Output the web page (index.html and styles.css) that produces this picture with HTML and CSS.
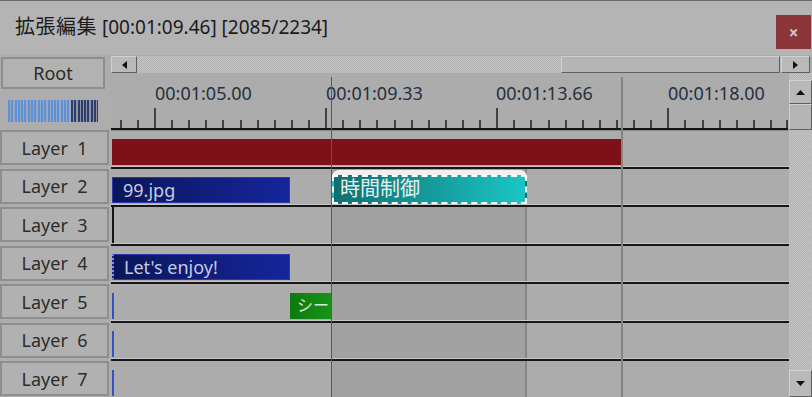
FILE: index.html
```html
<!DOCTYPE html>
<html lang="ja">
<head>
<meta charset="utf-8">
<title>拡張編集</title>
<link rel="stylesheet" href="styles.css">
</head>
<body>
<div class="window">
  <header class="titlebar">
    <span class="title"><span class="title-jp">拡張編集</span> [00:01:09.46] [2085/2234]</span>
    <div class="close">×</div>
  </header>
  <div class="main">
    <aside class="left">
      <div class="root">Root</div>
      <div class="meter"><div class="meter-lo"></div><div class="meter-hi"></div></div>
      <div class="layers">
        <div class="layer"><div class="layer-btn">Layer  1</div></div>
        <div class="layer"><div class="layer-btn">Layer  2</div></div>
        <div class="layer"><div class="layer-btn">Layer  3</div></div>
        <div class="layer"><div class="layer-btn">Layer  4</div></div>
        <div class="layer"><div class="layer-btn">Layer  5</div></div>
        <div class="layer"><div class="layer-btn">Layer  6</div></div>
        <div class="layer"><div class="layer-btn">Layer  7</div></div>
      </div>
    </aside>
    <section class="right">
      <div class="hscroll">
        <div class="sb-btn sb-left"><svg width="5" height="8" viewBox="0 0 5 8"><path d="M5 0V8L0 4Z" fill="#111"/></svg></div>
        <div class="track"><div class="thumb"></div></div>
        <div class="sb-btn sb-right"><svg width="5" height="8" viewBox="0 0 5 8"><path d="M0 0V8L5 4Z" fill="#111"/></svg></div>
      </div>
      <div class="content">
        <div class="timeline">
          <svg class="ruler" width="678" height="57" viewBox="0 0 678 57">
            <g class="labels">
              <text x="44" y="27">00:01:05.00</text>
              <text x="215" y="27">00:01:09.33</text>
              <text x="385" y="27">00:01:13.66</text>
              <text x="557" y="27">00:01:18.00</text>
            </g>
            <rect x="0" y="55" width="677" height="2" fill="#141414"/>
            <path stroke="#141414" stroke-width="1.4" d="M10 47V55M27 47V55M61 47V55M78 47V55M95 47V55M112 47V55M130 47V55M147 47V55M164 47V55M181 47V55M198 47V55M232 47V55M249 47V55M266 47V55M284 47V55M301 47V55M318 47V55M335 47V55M352 47V55M369 47V55M403 47V55M420 47V55M438 47V55M455 47V55M472 47V55M489 47V55M506 47V55M523 47V55M540 47V55M574 47V55M592 47V55M609 47V55M626 47V55M643 47V55M660 47V55M676 47V55M44 35V55M215 35V55M386 35V55M557 35V55"/>
          </svg>
          <div class="rows">
            <div class="row first">
              <div class="clip red" style="left:1px;width:509px"></div>
            </div>
            <div class="row">
              <div class="zone"></div>
              <div class="clip blue" style="left:1px;width:178px"><span>99.jpg</span></div>
              <div class="clip selected" style="left:221px;width:195px"><div class="teal">時間制御</div></div>
            </div>
            <div class="row">
              <div class="zone"></div>
              <div class="mark-black"></div>
            </div>
            <div class="row">
              <div class="zone"></div>
              <div class="clip blue dotted" style="left:1px;width:178px"><span>Let's enjoy!</span></div>
            </div>
            <div class="row">
              <div class="zone"></div>
              <div class="mark-blue"></div>
              <div class="clip green" style="left:179px;width:41px"><span>シー</span></div>
            </div>
            <div class="row">
              <div class="zone"></div>
              <div class="mark-blue"></div>
            </div>
            <div class="row">
              <div class="zone"></div>
              <div class="mark-blue"></div>
            </div>
          </div>
          <div class="gridline"></div>
          <div class="playhead"></div>
        </div>
        <div class="vscroll">
          <div class="vbtn up"><svg width="9" height="5" viewBox="0 0 9 5"><path d="M0 5H9L4.5 0Z" fill="#111"/></svg></div>
          <div class="vthumb"></div>
          <div class="vtrack"></div>
          <div class="vbtn down"><svg width="9" height="5" viewBox="0 0 9 5"><path d="M0 0H9L4.5 5Z" fill="#111"/></svg></div>
        </div>
      </div>
    </section>
  </div>
</div>
</body>
</html>
```
FILE: styles.css
```css
* { box-sizing: border-box; }
html, body { margin: 0; padding: 0; }
body {
  width: 812px;
  height: 397px;
  overflow: hidden;
  background: #acacac;
  font-family: "Noto Sans", "Noto Sans CJK JP", sans-serif;
}
.window {
  width: 812px;
  height: 397px;
  display: flex;
  flex-direction: column;
  border-top: 1px solid #6a6a6a;
  background: #acacac;
}
.titlebar {
  height: 54px;
  flex: none;
  background: #b4b4b4;
  display: flex;
  align-items: flex-start;
  justify-content: space-between;
}
.title {
  margin: 12px 0 0 15px;
  font-size: 19px;
  line-height: 28px;
  color: #1b1b1b;
  white-space: nowrap;
}
.title-jp {
  font-size: 20px;
  letter-spacing: 0.5px;
}
.close {
  width: 35px;
  height: 34px;
  margin: 14px 1px 0 0;
  background: #8b3538;
  color: #cbc4c4;
  font-size: 17px;
  font-weight: bold;
  display: flex;
  align-items: center;
  justify-content: center;
  line-height: 1;
}
.main {
  flex: 1;
  min-height: 0;
  display: flex;
}
.left {
  width: 111px;
  flex: none;
  display: flex;
  flex-direction: column;
  background: #adadad;
}
.root {
  margin: 2px 0 0 1px;
  width: 104px;
  height: 32px;
  flex: none;
  border: 2px solid #8e8e8e;
  background: #b2b2b2;
  display: flex;
  align-items: center;
  justify-content: center;
  font-size: 18px;
  color: #2a2a2a;
}
.meter {
  margin: 11px 0 0 8px;
  width: 90px;
  height: 22px;
  flex: none;
  display: flex;
}
.meter-lo {
  width: 63px;
  background: repeating-linear-gradient(90deg, #5c91d8 0 2px, #9aa8bf 2px 3.3px);
}
.meter-hi {
  width: 27px;
  background: repeating-linear-gradient(90deg, #2f3d6a 0 2px, #8c93a6 2px 3.3px);
}
.layers {
  margin-top: 8px;
  display: flex;
  flex-direction: column;
}
.layer {
  height: 38.5px;
  flex: none;
}
.layer-btn {
  width: 109px;
  height: 35px;
  border: 2px solid #8e8e8e;
  background: #b1b1b1;
  display: flex;
  align-items: center;
  justify-content: center;
  font-size: 18px;
  white-space: pre;
  color: #2c2c2c;
}
.right {
  flex: 1;
  min-width: 0;
  display: flex;
  flex-direction: column;
}
.hscroll {
  height: 18px;
  flex: none;
  display: flex;
  padding-top: 1px;
}
.sb-btn {
  border: 1px solid;
  border-color: #d2d2d2 #5f5f5f #5f5f5f #d2d2d2;
  background: #b9b9b9;
  display: flex;
  align-items: center;
  justify-content: center;
  flex: none;
}
.sb-left { width: 26px; }
.sb-right { width: 29px; margin-right: 2px; }
.track {
  flex: 1;
  display: flex;
  background-color: #bbbbbb;
  background-image: repeating-conic-gradient(#b4b4b4 0 25%, #c2c2c2 0 50%);
  background-size: 2px 2px;
}
.thumb {
  width: 219px;
  margin-left: auto;
  margin-right: 1px;
  border: 1px solid;
  border-color: #cfcfcf #5f5f5f #5f5f5f #cfcfcf;
  background: #b5b5b5;
}
.content {
  flex: 1;
  min-height: 0;
  display: flex;
}
.timeline {
  width: 678px;
  flex: none;
  position: relative;
  overflow: hidden;
  background: #acacac;
}
.ruler { display: block; }
.labels {
  font-family: "Noto Sans", sans-serif;
  font-size: 18px;
  fill: #263040;
}
.rows {
  display: flex;
  flex-direction: column;
}
.row {
  height: 38.5px;
  flex: none;
  position: relative;
  border-top: 2px solid #161616;
  box-shadow: 0 -1px 0 #c6c6c6;
}
.row.first {
  height: 36.5px;
  border-top: 1px solid #8a8a8a;
  box-shadow: none;
}
.zone {
  position: absolute;
  left: 221px;
  width: 195px;
  top: 0;
  bottom: 0;
  background: #a1a1a1;
  border-right: 2px solid #868686;
}
.clip {
  position: absolute;
  top: 8.5px;
  height: 26px;
  font-size: 18px;
  line-height: 24px;
  white-space: nowrap;
  overflow: hidden;
}
.row.first .clip { top: 8px; }
.clip span { padding-left: 10px; }
.red { background: #7e1117; }
.blue {
  background: linear-gradient(90deg, #0b165a, #15259c);
  border: 1px solid #2a3aa6;
  color: #c7cbe0;
}
.dotted { border-left: 2px dotted #8c94c8; }
.green {
  background: linear-gradient(90deg, #0d7a0d, #179417);
  color: #d8ead8;
  font-size: 16px;
}
.green span { padding-left: 7px; }
.selected {
  top: 1.5px;
  height: 36px;
  padding: 5px 0 2px 0;
  background: #f0f0f0;
  border-radius: 7px 7px 0 0;
}
.teal {
  height: 100%;
  background: linear-gradient(90deg, #0f6f70, #1bc5c5);
  border: 2px dashed #ffffff;
  color: #e6f2f2;
  font-size: 20px;
  line-height: 24px;
  padding-left: 6px;
}
.mark-black {
  position: absolute;
  left: 1px;
  top: 0;
  bottom: 0;
  width: 2px;
  background: #151515;
}
.mark-blue {
  position: absolute;
  left: 1px;
  top: 8.5px;
  height: 26px;
  width: 2px;
  background: #3450c4;
}
.gridline {
  position: absolute;
  left: 510px;
  top: 4px;
  bottom: 0;
  width: 2px;
  background: #848484;
}
.playhead {
  position: absolute;
  left: 220px;
  top: 4px;
  bottom: 0;
  width: 1px;
  background: #c4292c;
}
.vscroll {
  flex: 1;
  display: flex;
  flex-direction: column;
  padding-top: 7px;
  background-color: #bbbbbb;
  background-image: repeating-conic-gradient(#b4b4b4 0 25%, #c2c2c2 0 50%);
  background-size: 2px 2px;
}
.vbtn {
  border: 1px solid;
  border-color: #d2d2d2 #5f5f5f #5f5f5f #d2d2d2;
  background: #b9b9b9;
  display: flex;
  align-items: center;
  justify-content: center;
  flex: none;
}
.vbtn.up { height: 24px; }
.vbtn.down { height: 27px; }
.vthumb {
  height: 26px;
  flex: none;
  border: 1px solid;
  border-color: #cfcfcf #5f5f5f #5f5f5f #cfcfcf;
  background: #b5b5b5;
}
.vtrack { flex: 1; }
```
